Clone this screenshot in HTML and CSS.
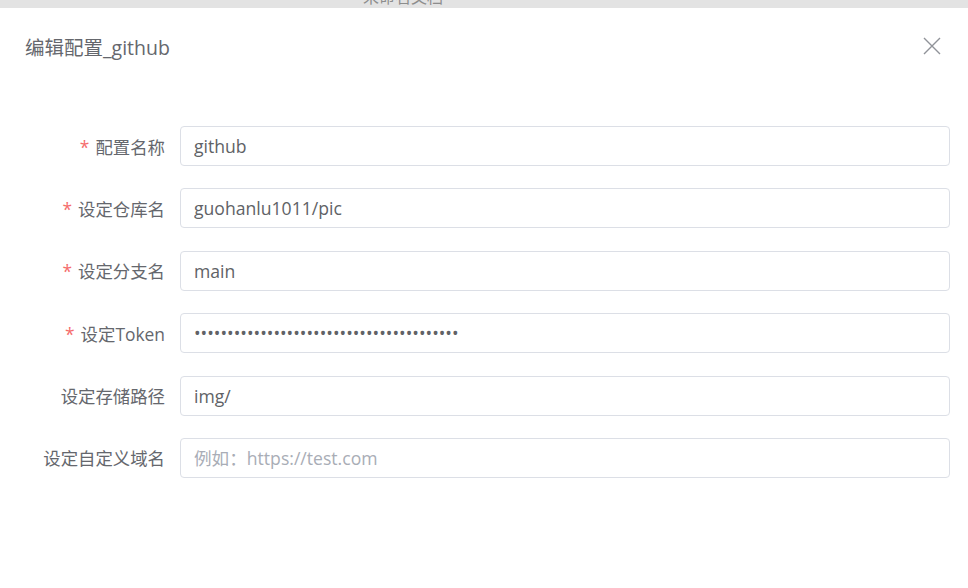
FILE: index.html
```html
<!DOCTYPE html>
<html lang="zh">
<head>
<meta charset="utf-8">
<link rel="stylesheet" href="styles.css">
</head>
<body>
<div class="topbar"><span class="doc-title">未命名文档</span></div>
<div class="dialog">
  <div class="dialog-header">
    <span class="dialog-title">编辑配置_github</span>
    <svg class="close" width="18" height="18" viewBox="0 0 18 18"><path d="M1 1 L17 17 M17 1 L1 17" stroke="#909399" stroke-width="1.4" fill="none"/></svg>
  </div>
  <form class="form">
    <div class="row"><label class="label"><span class="req">*</span>配置名称</label><input class="input" value="github"></div>
    <div class="row"><label class="label"><span class="req">*</span>设定仓库名</label><input class="input" value="guohanlu1011/pic"></div>
    <div class="row"><label class="label"><span class="req">*</span>设定分支名</label><input class="input" value="main"></div>
    <div class="row"><label class="label"><span class="req">*</span>设定Token</label><input class="input" type="password" value="ghp_abcdefghijklmnopqrstuvwxyz0123456789"></div>
    <div class="row"><label class="label">设定存储路径</label><input class="input" value="img/"></div>
    <div class="row"><label class="label">设定自定义域名</label><input class="input" placeholder="例如：https://test.com"></div>
  </form>
</div>
</body>
</html>
```
FILE: styles.css
```css
html, body {
  margin: 0;
  padding: 0;
  background: #ffffff;
  font-family: "Open Sans", "Noto Sans CJK SC", sans-serif;
  overflow: hidden;
}
.topbar {
  height: 8px;
  background: #e3e3e3;
  overflow: hidden;
  position: relative;
}
.doc-title {
  position: absolute;
  left: 363px;
  top: -14px;
  font-size: 16px;
  line-height: 22px;
  color: #8d8d8d;
}
.dialog {
  background: #fff;
  height: 580px;
}
.dialog-header {
  display: flex;
  align-items: center;
  justify-content: space-between;
  padding: 0 27px 0 25px;
  height: 78px;
}
.dialog-title {
  font-size: 19.5px;
  color: #65676d;
  margin-top: -1px;
}
.close {
  display: block;
  margin-top: -2px;
}
.form {
  display: flex;
  flex-direction: column;
  gap: 22.4px;
  padding: 40px 18px 0 0;
}
.row {
  display: flex;
  align-items: center;
}
.label {
  flex: none;
  width: 180px;
  text-align: right;
  padding-right: 15px;
  box-sizing: border-box;
  font-size: 17.4px;
  color: #65676d;
}
.req {
  color: #f56c6c;
  margin-right: 6px;
}
.input {
  flex: 1;
  height: 40px;
  box-sizing: border-box;
  border: 1px solid #dcdfe6;
  border-radius: 4px;
  padding: 0 14px 0 13px;
  font-family: "Open Sans", "Noto Sans CJK SC", sans-serif;
  font-size: 17.6px;
  color: #606266;
  outline: none;
  background: #fff;
}
.input::placeholder {
  color: #a9adb6;
}
```
